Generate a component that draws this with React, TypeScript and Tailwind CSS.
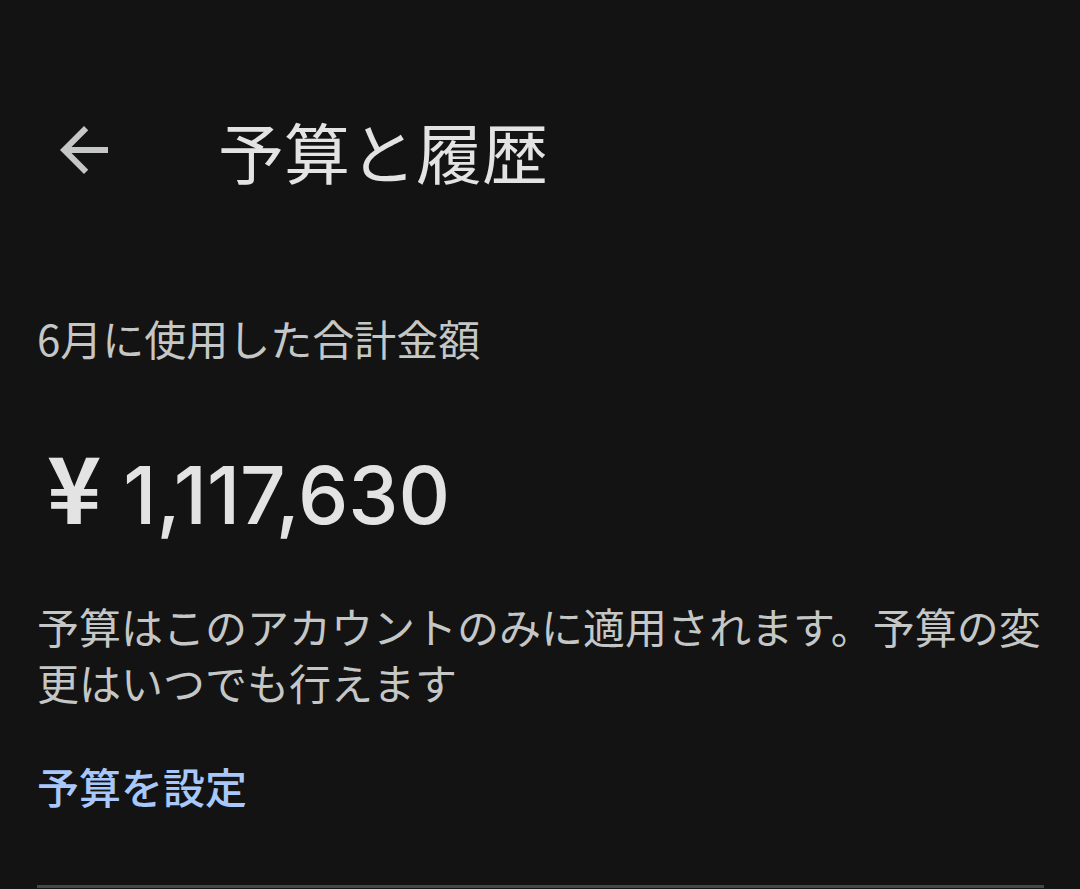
export default function App() {
  return (
    <div className="w-[1080px] h-[889px] bg-[#131313] overflow-hidden" style={{ fontFamily: '"Noto Sans CJK JP", "Noto Sans", sans-serif' }}>
      <header className="flex items-center h-[110px] mt-[95px] pl-[48px]">
        <svg viewBox="0 0 24 24" className="w-[72px] h-[72px] shrink-0" fill="#c4c7c5">
          <path d="M20 11H7.83l5.59-5.59L12 4l-8 8 8 8 1.41-1.41L7.83 13H20v-2z" />
        </svg>
        <h1 className="ml-[98px] text-[66px] leading-none text-[#e3e3e3]">予算と履歴</h1>
      </header>

      <div className="px-[37px]">
        <p className="mt-[105px] text-[42px] leading-[56px] text-[#c4c7c5]">6月に使用した合計金額</p>

        <p className="mt-[72px] h-[88px] flex items-baseline pl-[10px] text-[#e3e3e3] leading-none">
          <span className="text-[92px] font-bold">¥</span>
          <span className="ml-[22px] text-[80px] font-medium" style={{ fontFamily: 'Inter, "Noto Sans", sans-serif' }}>
            1,117,630
          </span>
        </p>

        <p className="mt-[72px] text-[42px] leading-[56px] text-[#c4c7c5]">
          予算はこのアカウントのみに適用されます。予算の変更はいつでも行えます
        </p>

        <button className="block mt-[48px] text-[42px] leading-[56px] font-medium text-[#a8c7fa]">予算を設定</button>

        <div className="mt-[71px] h-[3px] w-[1007px] bg-[#444746]" />
      </div>
    </div>
  )
}
